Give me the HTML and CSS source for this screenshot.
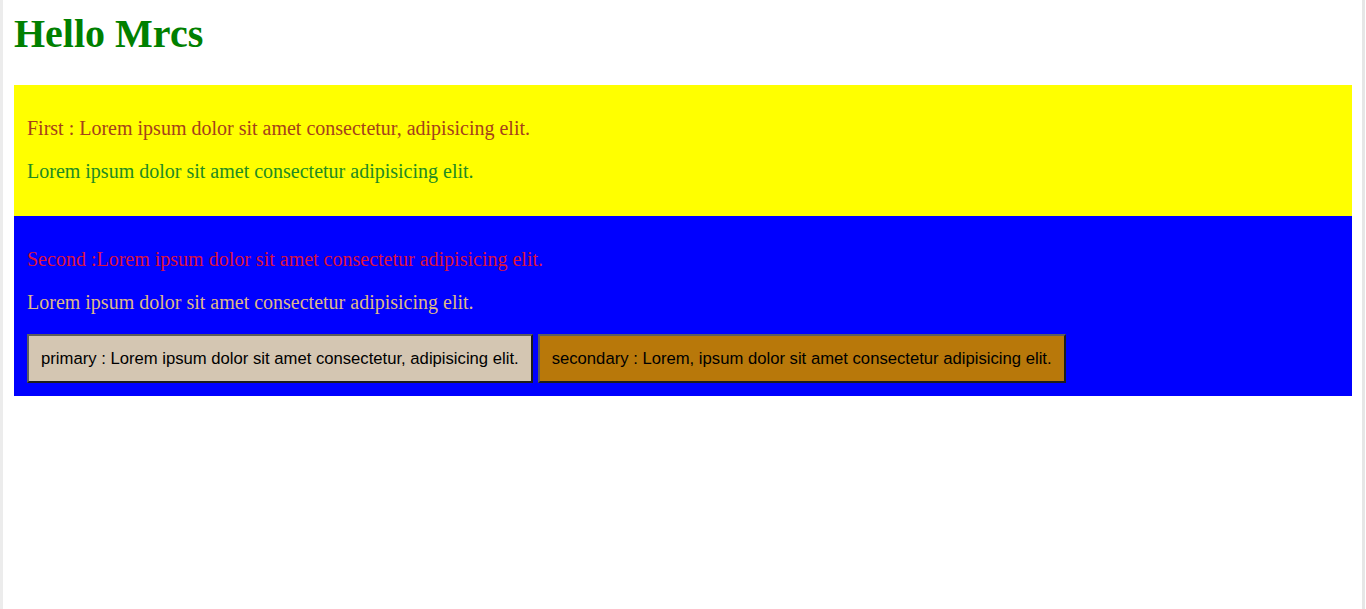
FILE: index.html
```html
<!DOCTYPE html>
<html>
<head>
<meta charset="utf-8">
<link rel="stylesheet" href="styles.css">
</head>
<body>
<div class="frame">
  <h1 class="title">Hello Mrcs</h1>
  <section class="first">
    <p class="first-a">First : Lorem ipsum dolor sit amet consectetur, adipisicing elit.</p>
    <p class="first-b">Lorem ipsum dolor sit amet consectetur adipisicing elit.</p>
  </section>
  <section class="second">
    <p class="second-a">Second :Lorem ipsum dolor sit amet consectetur adipisicing elit.</p>
    <p class="second-b">Lorem ipsum dolor sit amet consectetur adipisicing elit.</p>
    <div class="actions">
      <button class="btn btn-primary">primary : Lorem ipsum dolor sit amet consectetur, adipisicing elit.</button>
      <button class="btn btn-secondary">secondary : Lorem, ipsum dolor sit amet consectetur adipisicing elit.</button>
    </div>
  </section>
</div>
</body>
</html>
```
FILE: styles.css
```css
html, body {
  margin: 0;
  height: 100%;
  background: #ffffff;
}
body {
  font-family: "Liberation Serif", "Times New Roman", serif;
}
.frame {
  box-sizing: border-box;
  height: 609px;
  margin: 0 1px 0 0;
  border-left: 3px solid #ececec;
  border-right: 3px solid #e6e6e6;
  padding: 11px 10px 0 11px;
}
.title {
  margin: 0 0 28px 0;
  font-size: 40px;
  font-weight: bold;
  color: #008000;
  line-height: 46px;
}
.first {
  background: #ffff00;
  padding: 32px 13px 13px;
}
.first p, .second p {
  margin: 0 0 20px 0;
  font-size: 20px;
  line-height: 23px;
}
.first-a { color: #a5421a; }
.first-b { color: #228b22; }
.second {
  background: #0000ff;
  padding: 32px 13px 13px;
}
.second-a { color: #dc143c; }
.second-b { color: #deb887; }
.second p.second-b { margin-bottom: 20px; }
.actions {
  display: flex;
  gap: 5px;
}
.btn {
  font-family: "Liberation Sans", Arial, sans-serif;
  font-size: 16.67px;
  color: #000;
  height: 49px;
  padding: 0 12px;
  border-width: 2px;
  border-style: solid;
  border-color: #5e5e5e #1c1c1c #1c1c1c #5e5e5e;
}
.btn-primary { background: #d4c6b2; }
.btn-secondary { background: #b8780a; }
```
